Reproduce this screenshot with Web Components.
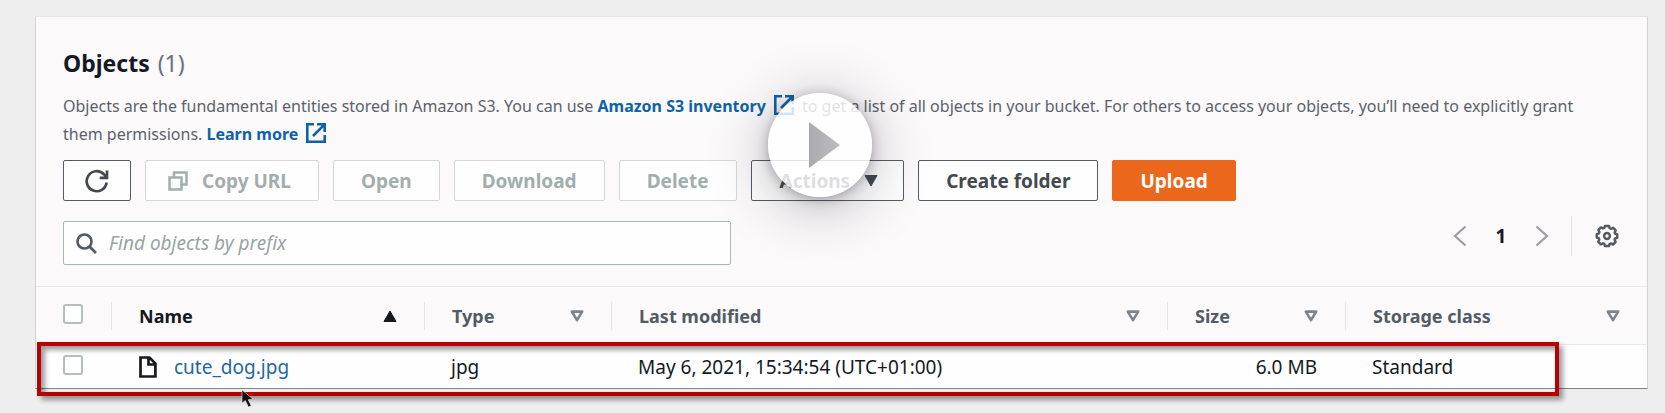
<!DOCTYPE html>
<html lang="en">
<head>
<meta charset="utf-8">
<title>Objects</title>
<style>
html { background: #eeeeee; }
body { margin: 0; font: 16px/28px "Noto Sans", "Open Sans", sans-serif; color: #16191f; }
</style>
</head>
<body>
<objects-page></objects-page>
<script>
const define = (name, html, setup) => {
  const template = document.createElement('template');
  template.innerHTML = html;
  customElements.define(name, class extends HTMLElement {
    constructor() {
      super();
      this.attachShadow({ mode: 'open' }).append(template.content.cloneNode(true));
    }
    connectedCallback() { if (setup) setup(this, this.shadowRoot); }
  });
};

const ICONS = {
  external: '<svg width="20" height="20" viewBox="0 0 20 20" fill="none" stroke="currentColor" stroke-width="2.6"><path d="M8 1.3H1.3v17.4h17.4V12M11 1.3h7.7V9M18.3 1.7L7 13"/></svg>',
  refresh: '<svg width="24" height="24" viewBox="0 0 24 24" fill="none" stroke="currentColor" stroke-width="2.7"><path d="M21.6 13.5A10 10 0 1 1 19 5.4l2.2 2.2M22 1.5v7.3h-7.3"/></svg>',
  copy: '<svg width="20" height="20" viewBox="0 0 20 20" fill="none" stroke="currentColor" stroke-width="2.5"><path d="M1.5 6.5h12v12h-12zM6 6V1.5h12.500v12H14"/></svg>',
  search: '<svg width="21" height="21" viewBox="0 0 21 21" fill="none" stroke="currentColor" stroke-width="2.700"><circle cx="8.500" cy="8.500" r="7"/><path d="M13.500 13.500l6.500 6.500"/></svg>',
  prev: '<svg width="14" height="22" viewBox="0 0 14 22" fill="none" stroke="currentColor" stroke-width="2.2"><path d="M12.500 1.500L2 11l10.500 9.500"/></svg>',
  next: '<svg width="14" height="22" viewBox="0 0 14 22" fill="none" stroke="currentColor" stroke-width="2.2"><path d="M1.500 1.500L12 11 1.500 20.500"/></svg>',
  gear: '<svg width="24" height="24" viewBox="0 0 24 24" fill="none" stroke="currentColor" stroke-width="2.5" stroke-linejoin="round"><path d="M10 2h4l.7 2.200 1.300.6 2.200-1 2.500 2.500-1 2.200.5 1.300L22.200 10.300v3.500l-2.100.700-.5 1.300 1 2.200-2.500 2.500-2.200-1-1.300.6L14 22h-4l-.7-2.100-1.300-.6-2.200 1-2.500-2.500 1-2.200-.5-1.300-2-.7v-3.500l2.100-.700.5-1.300-1-2.200 2.500-2.500 2.200 1 1.300-.6z"/><circle cx="12" cy="12" r="2.900"/></svg>',
  file: '<svg width="18" height="22" viewBox="0 0 18 22" fill="none" stroke="currentColor" stroke-width="2.700"><path d="M1.500 1.500H10.500L16.400 7.500V20.500H1.500zM9.500 1.500v7h7"/></svg>',
  caret: '<svg width="14" height="12" viewBox="0 0 14 12"><path d="M1 .5h12L7 11z" fill="currentColor" stroke="currentColor" stroke-linejoin="round"/></svg>',
  asc: '<svg width="14" height="12" viewBox="0 0 14 12"><path d="M1 11.500h12L7 1z" fill="currentColor" stroke="currentColor" stroke-linejoin="round"/></svg>',
  sort: '<svg width="14" height="12" viewBox="0 0 14 12"><path d="M1.800 1.600h10.400L7 10.200z" fill="none" stroke="currentColor" stroke-width="2.600" stroke-linejoin="round"/></svg>'
};

define('ui-icon', '<style>:host{display:inline-flex;flex:none}svg{display:block}</style><span></span>',
  (host, root) => { root.querySelector('span').innerHTML = ICONS[host.getAttribute('name')]; });

define('ui-link', `<style>
:host { display: inline; }
a { color: #0f62a6; font-weight: 700; text-decoration: none; }
ui-icon { margin: 0 4px 0 8px; vertical-align: -3px; }
</style><a href="#"><slot></slot><ui-icon name="external"></ui-icon></a>`);

define('ui-button', `<style>
:host { display: block; flex: none; }
button { display: flex; align-items: center; justify-content: center; gap: 14px; box-sizing: border-box; height: 41px; width: 100%;
  margin: 0; padding: 0 27px; border: 1px solid #545b64; border-radius: 2px; background: #fefefe; color: #444950; font: 700 19px/28px "Noto Sans", sans-serif; white-space: nowrap; }
:host([icon-only]) button { padding: 0 21px; }
:host([icon-start]) button { padding: 0 27px 0 22px; }
:host([icon-end]) button { padding: 0 25px 0 28px; }
:host([primary]) button { background: #eb671b; border-color: #eb671b; color: #fff; }
button:disabled { border-color: #d3d7d8; color: #a2adad; }
</style><button type="button"><slot></slot></button>`, (host, root) => {
  const b = root.querySelector('button');
  b.disabled = host.hasAttribute('disabled');
  if (host.hasAttribute('label')) b.setAttribute('aria-label', host.getAttribute('label'));
});

define('object-search', `<style>
:host { display: block; }
label { display: flex; align-items: center; gap: 12px; box-sizing: border-box; height: 44px; padding: 0 12px; border: 1px solid #aab7b8; border-radius: 2px; background: #fefefe; color: #545b64; }
input { flex: 1; min-width: 0; padding: 0; border: 0; outline: 0; background: none; color: #16191f; font: 19px/28px "Noto Sans", sans-serif; }
input::placeholder { color: #9aa3a5; opacity: 1; font-style: italic; }
</style><label><ui-icon name="search"></ui-icon><input type="text" aria-label="Find objects by prefix" placeholder="Find objects by prefix"></label>`);

define('object-pager', `<style>
:host { display: flex; align-items: center; height: 40px; color: #9a9da2; }
button { display: flex; padding: 0; border: 0; background: none; color: inherit; }
.page { width: 68px; justify-content: center; color: #16191f; font: 700 19px/28px "Noto Sans", sans-serif; }
.gear { height: 40px; align-items: center; margin-left: 22px; padding-left: 23px; border-left: 1px solid #e6e5e7; color: #545b64; }
</style>
<button aria-label="Previous page"><ui-icon name="prev"></ui-icon></button>
<button class="page">1</button>
<button aria-label="Next page"><ui-icon name="next"></ui-icon></button>
<button class="gear" aria-label="Preferences"><ui-icon name="gear"></ui-icon></button>`);

define('object-header', `<style>
:host { display: block; padding: 30px 28px 21px 27px; }
h2 { margin: 0; font-size: 23px; line-height: 32px; font-weight: 700; }
h2 span { margin-left: 2px; color: #6a7079; font-weight: 400; }
p { margin: 13px 36px 12px 0; color: #5c626a; }
.buttons { display: flex; flex-wrap: wrap; gap: 14px; }
.tools { display: flex; justify-content: space-between; padding-top: 15px; }
object-search { flex: 0 1 668px; margin-top: 5px; }
</style>
<h2>Objects <span>(1)</span></h2>
<p>Objects are the fundamental entities stored in Amazon S3. You can use <ui-link>Amazon S3 inventory</ui-link> to get a list of all objects in your bucket. For others to access your objects, you’ll need to explicitly grant them permissions. <ui-link>Learn more</ui-link></p>
<div class="buttons">
<ui-button icon-only label="Refresh"><ui-icon name="refresh"></ui-icon></ui-button>
<ui-button disabled icon-start><ui-icon name="copy"></ui-icon>Copy URL</ui-button>
<ui-button disabled>Open</ui-button>
<ui-button disabled>Download</ui-button>
<ui-button disabled>Delete</ui-button>
<ui-button icon-end>Actions<ui-icon name="caret"></ui-icon></ui-button>
<ui-button>Create folder</ui-button>
<ui-button primary>Upload</ui-button>
</div>
<div class="tools"><object-search></object-search><object-pager></object-pager></div>`);

define('object-table', `<style>
:host { display: block; position: relative; }
table { width: 100%; table-layout: fixed; border-collapse: separate; border-spacing: 0; }
th, td { box-sizing: border-box; padding: 0 27px; text-align: left; white-space: nowrap; }
th { height: 59px; padding: 0; border-top: 1px solid #e9e8ea; border-bottom: 1px solid #e9e8ea; font-size: 18px; font-weight: 700; color: #545b64; }
th.sorted { color: #16191f; }
th div { display: flex; align-items: center; justify-content: space-between; height: 28px; padding: 0 27px; border-left: 1px solid #e6e5e7; }
th ui-icon { color: #7b848c; }
th.sorted ui-icon { color: #16191f; }
td { height: 43px; background: #fefefe; font-size: 19px; }
.check { padding: 0 0 0 27px; }
td.size { padding-right: 28px; text-align: right; }
input { display: block; appearance: none; box-sizing: border-box; width: 20px; height: 20px; margin: 0 0 4px; border: 2px solid #b4bebf; border-radius: 3px; background: #fff; }
.name { display: flex; align-items: center; gap: 17px; padding-left: 1px; }
a { color: #22679f; text-decoration: none; }
.mark { position: absolute; box-sizing: border-box; top: 56px; left: 1px; right: 88px; height: 54px; border: 4px solid #b80000; box-shadow: 4px 4px 5px rgba(0,0,0,.38), inset 4px 4px 5px rgba(0,0,0,.38); pointer-events: none; }
.cursor { position: absolute; top: 104px; left: 205px; }
</style>
<table>
<colgroup><col style="width:75px"><col style="width:313px"><col style="width:187px"><col><col style="width:178px"><col style="width:302px"></colgroup>
<thead><tr>
<th class="check"><input type="checkbox" aria-label="Select all objects"></th>
<th class="sorted"><div>Name<ui-icon name="asc"></ui-icon></div></th>
<th><div>Type<ui-icon name="sort"></ui-icon></div></th>
<th><div>Last modified<ui-icon name="sort"></ui-icon></div></th>
<th><div>Size<ui-icon name="sort"></ui-icon></div></th>
<th><div>Storage class<ui-icon name="sort"></ui-icon></div></th>
</tr></thead>
<tbody><tr>
<td class="check"><input type="checkbox" aria-label="Select cute_dog.jpg"></td>
<td><div class="name"><ui-icon name="file"></ui-icon><a href="#">cute_dog.jpg</a></div></td>
<td>jpg</td>
<td>May 6, 2021, 15:34:54 (UTC+01:00)</td>
<td class="size">6.0 MB</td>
<td>Standard</td>
</tr></tbody>
</table>
<div class="mark"></div>
<svg class="cursor" width="14" height="18" viewBox="0 0 14 18"><path d="M1 0v13l3.300-2.500L7.500 17l2.700-1.300L7.200 9.700 12 9z" fill="#111" stroke="#e8e8e8" stroke-width=".6"/></svg>`);

define('play-button', `<style>
:host { display: block; width: 104px; height: 104px; }
button { display: flex; align-items: center; justify-content: center; width: 100%; height: 100%; padding: 0; border: 0; border-radius: 50%; background: rgba(255,255,255,.82); box-shadow: 0 2px 12px rgba(40,35,50,.32), 0 8px 56px rgba(40,35,50,.34); }
svg { margin-left: 10px; }
</style>
<button aria-label="Play"><svg width="32" height="48" viewBox="0 0 32 48"><defs><linearGradient id="g" x2="1"><stop stop-color="#aaa9ae"/><stop offset="1" stop-color="#bdbcc1"/></linearGradient></defs><path d="M0 1v46l31-23z" fill="url(#g)"/></svg></button>`);

define('objects-page', `<style>
:host { display: block; position: relative; padding: 16px 17px 24px 35px; }
section { border: 1px solid #d3d2d4; border-top-color: #e6e5e6; border-bottom-color: #7d8484; background: #fbf9fa; }
play-button { position: absolute; top: 93px; left: calc(50% - 65px); }
</style>
<section><object-header></object-header><object-table></object-table></section>
<play-button></play-button>`);
</script>
</body>
</html>
